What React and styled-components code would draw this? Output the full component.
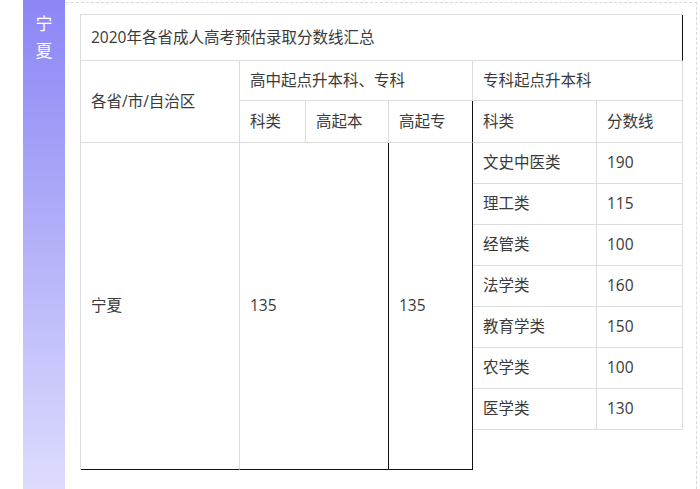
import styled, { createGlobalStyle } from "styled-components";

const GlobalStyle = createGlobalStyle`
  html, body {
    margin: 0;
    padding: 0;
    background: #fff;
    overflow: hidden;
  }
  body {
    font-family: "Open Sans", "Noto Sans CJK SC", sans-serif;
  }
`;

const gray = "#dcdcdc";
const dark = "#111";

const scores = [
  ["文史中医类", "190"],
  ["理工类", "115"],
  ["经管类", "100"],
  ["法学类", "160"],
  ["教育学类", "150"],
  ["农学类", "100"],
  ["医学类", "130"],
];

const App = () => {
  return (
    <Page>
      <GlobalStyle />
      <Side>
        <SideChar>宁</SideChar>
        <SideChar>夏</SideChar>
      </Side>
      <Panel>
        <Table>
          <colgroup>
            <col style={{ width: 159 }} />
            <col style={{ width: 66 }} />
            <col style={{ width: 83 }} />
            <col style={{ width: 84 }} />
            <col style={{ width: 124 }} />
            <col style={{ width: 86 }} />
          </colgroup>
          <tbody>
            <Row h={46}>
              <Cell colSpan={6} right={dark}>2020年各省成人高考预估录取分数线汇总</Cell>
            </Row>
            <Row h={40}>
              <Cell rowSpan={2}>各省/市/自治区</Cell>
              <Cell colSpan={3}>高中起点升本科、专科</Cell>
              <Cell colSpan={2}>专科起点升本科</Cell>
            </Row>
            <Row h={42}>
              <Cell>科类</Cell>
              <Cell>高起本</Cell>
              <Cell right={dark}>高起专</Cell>
              <Cell>科类</Cell>
              <Cell>分数线</Cell>
            </Row>
            {scores.map(([kind, score], i) => (
              <Row h={41} key={kind}>
                {i === 0 && (
                  <>
                    <Cell rowSpan={8} bottom={dark}>宁夏</Cell>
                    <Cell rowSpan={8} colSpan={2} right={dark} bottom={dark}>135</Cell>
                    <Cell rowSpan={8} right={dark} bottom={dark}>135</Cell>
                  </>
                )}
                <Cell>{kind}</Cell>
                <Cell>{score}</Cell>
              </Row>
            ))}
            <Row h={40}>
              <Cell colSpan={2} right="transparent" bottom="transparent" />
            </Row>
          </tbody>
        </Table>
      </Panel>
    </Page>
  );
};

const Page = styled.div`
  display: flex;
  width: 700px;
  height: 489px;
  overflow: hidden;
`;

const Side = styled.div`
  flex: 0 0 42px;
  margin-left: 23px;
  height: 489px;
  background: linear-gradient(180deg, #8b86f5 0%, #b4b1f9 50%, #dddcfd 100%);
  display: flex;
  flex-direction: column;
  align-items: center;
  padding-top: 9px;
  box-sizing: border-box;
`;

const SideChar = styled.span`
  color: #fff;
  font-family: "Noto Sans CJK SC", sans-serif;
  font-size: 17px;
  line-height: 27px;
`;

const Panel = styled.div`
  flex: 1;
  margin: 2px 3px 0 1px;
  border-top: 1px dashed #d8d8d8;
  border-right: 1px dashed #d8d8d8;
  padding: 11px 0 0 14px;
`;

const Table = styled.table`
  border-collapse: separate;
  border-spacing: 0;
  table-layout: fixed;
  width: 602px;
  border-top: 1px solid ${gray};
  border-left: 1px solid ${gray};
`;

const Row = styled.tr`
  height: ${(p) => p.h}px;
`;

const Cell = styled.td`
  box-sizing: border-box;
  padding: 0 0 2px 10px;
  border-right: 1px solid ${(p) => p.right || gray};
  border-bottom: 1px solid ${(p) => p.bottom || gray};
  color: #3a3a3a;
  font-size: 15.5px;
  line-height: 20px;
  vertical-align: middle;
  text-align: left;
  white-space: nowrap;
`;

export default App;
